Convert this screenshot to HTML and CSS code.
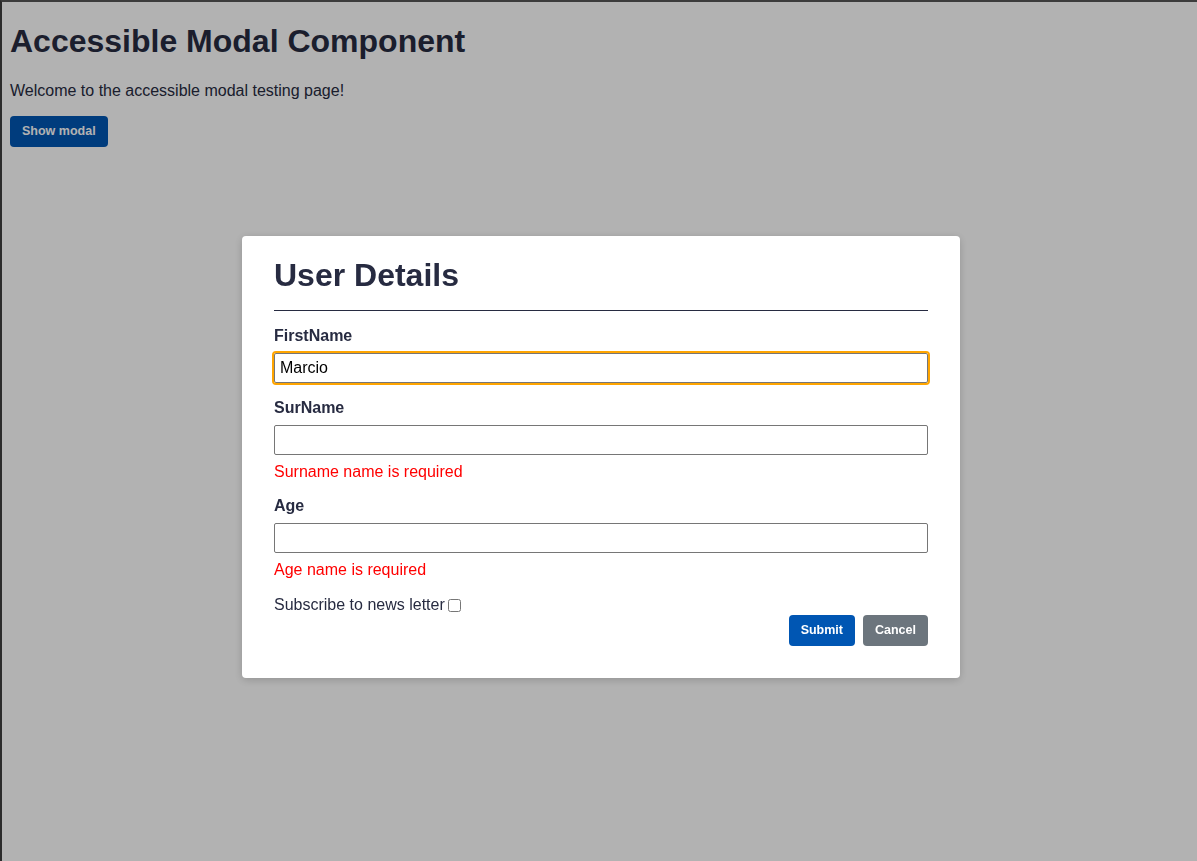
FILE: index.html
```html
<!DOCTYPE html>
<html lang="en">
<head>
<meta charset="utf-8">
<title>Accessible Modal Component</title>
<link rel="stylesheet" href="styles.css">
</head>
<body>
<main class="page">
  <h1 class="page-title">Accessible Modal Component</h1>
  <p class="page-intro">Welcome to the accessible modal testing page!</p>
  <button class="btn btn-primary" type="button">Show modal</button>
</main>

<div class="overlay">
  <div class="modal" role="dialog" aria-modal="true" aria-labelledby="modal-title">
    <h2 class="modal-title" id="modal-title">User Details</h2>
    <hr class="modal-rule">
    <form class="form">
      <div class="group">
        <label class="label" for="first">FirstName</label>
        <input class="input input-focus" id="first" type="text" value="Marcio">
      </div>
      <div class="group">
        <label class="label" for="sur">SurName</label>
        <input class="input" id="sur" type="text">
        <div class="error">Surname name is required</div>
      </div>
      <div class="group group-last">
        <label class="label" for="age">Age</label>
        <input class="input" id="age" type="text">
        <div class="error">Age name is required</div>
      </div>
      <div class="subscribe">
        <label for="news">Subscribe to news letter</label><input class="check" id="news" type="checkbox">
      </div>
      <div class="actions">
        <button class="btn btn-primary" type="submit">Submit</button>
        <button class="btn btn-secondary" type="button">Cancel</button>
      </div>
    </form>
  </div>
</div>

<div class="frame"></div>
</body>
</html>
```

FILE: styles.css
```css
html, body {
  margin: 0;
  padding: 0;
  background: #ffffff;
  height: 100%;
}

body {
  font-family: "Liberation Sans", Arial, sans-serif;
  color: #272b41;
  font-size: 16px;
}

.page {
  padding: 23px 10px 10px 10px;
}

.page-title {
  margin: 0;
  font-size: 32px;
  line-height: 37px;
  font-weight: 700;
}

.page-intro {
  margin: 22px 0 0 0;
  line-height: 18px;
}

.page .btn {
  margin-top: 16px;
}

.btn {
  font-family: "Liberation Sans", Arial, sans-serif;
  font-size: 12.5px;
  font-weight: 700;
  line-height: 15px;
  padding: 8px 12px;
  border: none;
  border-radius: 4px;
  color: #ffffff;
  cursor: pointer;
}

.btn-primary {
  background: #0056b3;
}

.btn-secondary {
  background: #6c757d;
}

.overlay {
  position: fixed;
  inset: 0;
  background: rgba(0, 0, 0, 0.3);
  display: flex;
  justify-content: center;
  align-items: flex-start;
  padding: 236px 0 0 5px;
  box-sizing: border-box;
}

.modal {
  width: 718px;
  box-sizing: border-box;
  background: #ffffff;
  border-radius: 4px;
  box-shadow: 0 2px 8px rgba(0, 0, 0, 0.18);
  padding: 21px 32px 32px 32px;
}

.modal-title {
  margin: 0;
  font-size: 32px;
  line-height: 37px;
  font-weight: 700;
  color: #272b41;
}

.modal-rule {
  margin: 16px 0 16px 0;
  border: none;
  border-top: 1px solid #272b41;
  height: 0;
}

.form {
  display: flex;
  flex-direction: column;
}

.group {
  display: flex;
  flex-direction: column;
  margin-bottom: 16px;
}

.group-last {
  margin-bottom: 17px;
}

.label {
  font-weight: 700;
  line-height: 18px;
  margin-bottom: 8px;
}

.input {
  height: 30px;
  box-sizing: border-box;
  border: 1px solid #767676;
  border-radius: 2px;
  font-family: "Liberation Sans", Arial, sans-serif;
  font-size: 16px;
  padding: 0 5px;
  color: #000000;
  background: #ffffff;
}

.input-focus {
  outline: 2px solid #ffa500;
  outline-offset: 0;
}

.error {
  color: #ff0000;
  line-height: 18px;
  margin-top: 8px;
}

.subscribe {
  display: flex;
  align-items: center;
  line-height: 18px;
}

.check {
  width: 13px;
  height: 13px;
  margin: 0 0 0 3px;
}

.actions {
  display: flex;
  justify-content: flex-end;
  gap: 8px;
  margin-top: 1px;
}

.frame {
  position: fixed;
  inset: 0;
  border-top: 2px solid #3c3c3c;
  border-left: 2px solid #2b2b2b;
  pointer-events: none;
}
```
